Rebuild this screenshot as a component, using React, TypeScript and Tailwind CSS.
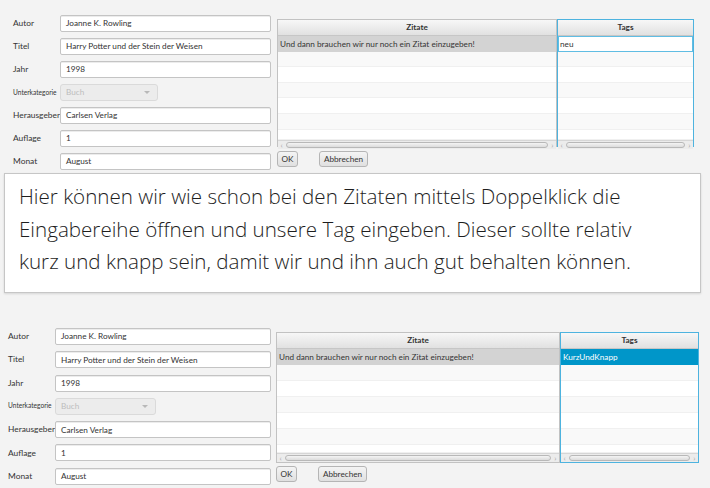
import React from "react";

type Variant = "edit" | "done";

const labels = ["Autor", "Titel", "Jahr", "Unterkategorie", "Herausgeber", "Auflage", "Monat"];
const values: Record<string, string> = {
  Autor: "Joanne K. Rowling",
  Titel: "Harry Potter und der Stein der Weisen",
  Jahr: "1998",
  Herausgeber: "Carlsen Verlag",
  Auflage: "1",
  Monat: "August",
};

const Field = ({ value }: { value: string }) => (
  <div className="h-[17px] w-full bg-white border border-[#c4c4c4] rounded-[2px] flex items-center px-[5px] text-[8.2px] text-[#333] shadow-[inset_0_1px_0_#ececec]">
    {value}
  </div>
);

const Combo = ({ w }: { w: string }) => (
  <div className={`${w} h-[17px] bg-[#ececec] border border-[#dadada] rounded-[3px] flex items-center justify-between px-[5px] text-[8.2px] text-[#bdbdbd]`}>
    <span>Buch</span>
    <span className="w-0 h-0 border-l-[3px] border-r-[3px] border-t-[3px] border-l-transparent border-r-transparent border-t-[#b8b8b8] mr-[2px]" />
  </div>
);

const ScrollBar = () => (
  <div className="h-[9px] bg-[#ececec] border-t border-[#d6d6d6] flex items-center px-[1px] text-[#a8a8a8] text-[8px] leading-none">
    <span className="w-[5px] text-center">‹</span>
    <div className="flex-1 h-[6px] mx-[2px] rounded-full border border-[#b8b8b8] bg-gradient-to-b from-[#f4f4f4] to-[#dcdcdc]" />
    <span className="w-[5px] text-center">›</span>
  </div>
);

const rowBg = ["", "bg-[#f9f9f9]", "bg-white", "bg-[#f9f9f9]", "bg-white", "bg-[#f9f9f9]", "bg-white"];

const Column = ({
  title,
  first,
  focus,
  rowH,
  lastH,
}: {
  title: string;
  first: React.ReactNode;
  focus?: boolean;
  rowH: string;
  lastH: string;
}) => (
  <div
    className={`flex flex-col h-full ${
      focus ? "border border-[#4db3df]" : "border border-[#c2c2c2]"
    }`}
  >
    <div className="h-[16px] shrink-0 flex items-center justify-center text-[8.2px] font-bold text-[#333] bg-gradient-to-b from-[#f7f7f7] to-[#e1e1e1] border-b border-[#c6c6c6]">
      {title}
    </div>
    {first}
    {rowBg.slice(1).map((bg, i) => (
      <div
        key={i}
        className={`${i === 5 ? lastH : rowH} shrink-0 ${bg} border-b border-[#f0f0f0]`}
      />
    ))}
    <div className="flex-1" />
    <ScrollBar />
  </div>
);

const Form = ({ variant }: { variant: Variant }) => {
  const edit = variant === "edit";
  const rowH = edit ? "h-[15.6px]" : "h-[16px]";
  const lastH = edit ? "h-[10px]" : "h-[8px]";
  return (
    <div className={edit ? "flex h-[173px] pl-[13px] pt-[15px]" : "flex h-[195px] pl-[8px] pt-[35px]"}>
      {/* Formular */}
      <div className={edit ? "w-[258px] flex flex-col gap-[6px]" : "w-[263px] flex flex-col gap-[6.3px]"}>
        {labels.map((l) => (
          <div key={l} className="flex items-center h-[17px]">
            <span
              className={`w-[47px] shrink-0 whitespace-nowrap text-[#333] ${
                l === "Unterkategorie" ? "text-[6.6px]" : "text-[8.4px]"
              }`}
            >
              {l}
            </span>
            {l === "Unterkategorie" ? (
              <Combo w={edit ? "w-[98px]" : "w-[101px]"} />
            ) : (
              <Field value={values[l]} />
            )}
          </div>
        ))}
      </div>

      {/* Tabellen */}
      <div className={edit ? "ml-[6px] pt-[4px] flex flex-col" : "ml-[5px] pt-[4px] flex flex-col"}>
        <div className={edit ? "flex h-[128px]" : "flex h-[131px]"}>
          <div className={edit ? "w-[280px]" : "w-[284px]"}>
            <Column
              title="Zitate"
              rowH={rowH}
              lastH={lastH}
              first={
                <div className={`${rowH} shrink-0 bg-[#d3d3d3] flex items-center px-[2px] text-[8.2px] text-[#333] whitespace-nowrap`}>
                  Und dann brauchen wir nur noch ein Zitat einzugeben!
                </div>
              }
            />
          </div>
          <div className={edit ? "w-[137px]" : "w-[139px]"}>
            <Column
              title="Tags"
              focus
              rowH={rowH}
              lastH={lastH}
              first={
                edit ? (
                  <div className={`${rowH} shrink-0 bg-white border border-[#60bde3] flex items-center px-[1px] text-[8.2px] text-[#333]`}>
                    neu
                  </div>
                ) : (
                  <div className={`${rowH} shrink-0 bg-[#0096c9] flex items-center px-[2px] text-[8.2px] text-white`}>
                    KurzUndKnapp
                  </div>
                )
              }
            />
          </div>
        </div>
        <div className={edit ? "flex gap-[21px] mt-[4px]" : "flex gap-[21px] mt-[3px]"}>
          <button className="h-[16px] w-[21px] text-[8.2px] text-[#333] rounded-[3px] border border-[#b5b5b5] bg-gradient-to-b from-[#f4f4f4] to-[#e0e0e0]">
            OK
          </button>
          <button className="h-[16px] w-[49px] text-[8.2px] text-[#333] rounded-[3px] border border-[#b5b5b5] bg-gradient-to-b from-[#f4f4f4] to-[#e0e0e0]">
            Abbrechen
          </button>
        </div>
      </div>
    </div>
  );
};

const App = () => {
  return (
    <div className="w-[710px] h-[488px] overflow-hidden bg-[#f3f3f3] font-['Lato',sans-serif]">
      <Form variant="edit" />
      {/* Erklärung */}
      <div className="ml-[4px] mr-[9px] h-[120px] bg-white border border-[#c6c6c6] shadow-[0_1px_2px_rgba(0,0,0,0.12)] pl-[14px] pt-[6px] font-['Open_Sans',sans-serif] font-light text-[20.6px] leading-[32.5px] text-[#1e1e1e]">
        <div>Hier können wir wie schon bei den Zitaten mittels Doppelklick die</div>
        <div>Eingabereihe öffnen und unsere Tag eingeben. Dieser sollte relativ</div>
        <div>kurz und knapp sein, damit wir und ihn auch gut behalten können.</div>
      </div>
      <Form variant="done" />
    </div>
  );
};

export default App;
